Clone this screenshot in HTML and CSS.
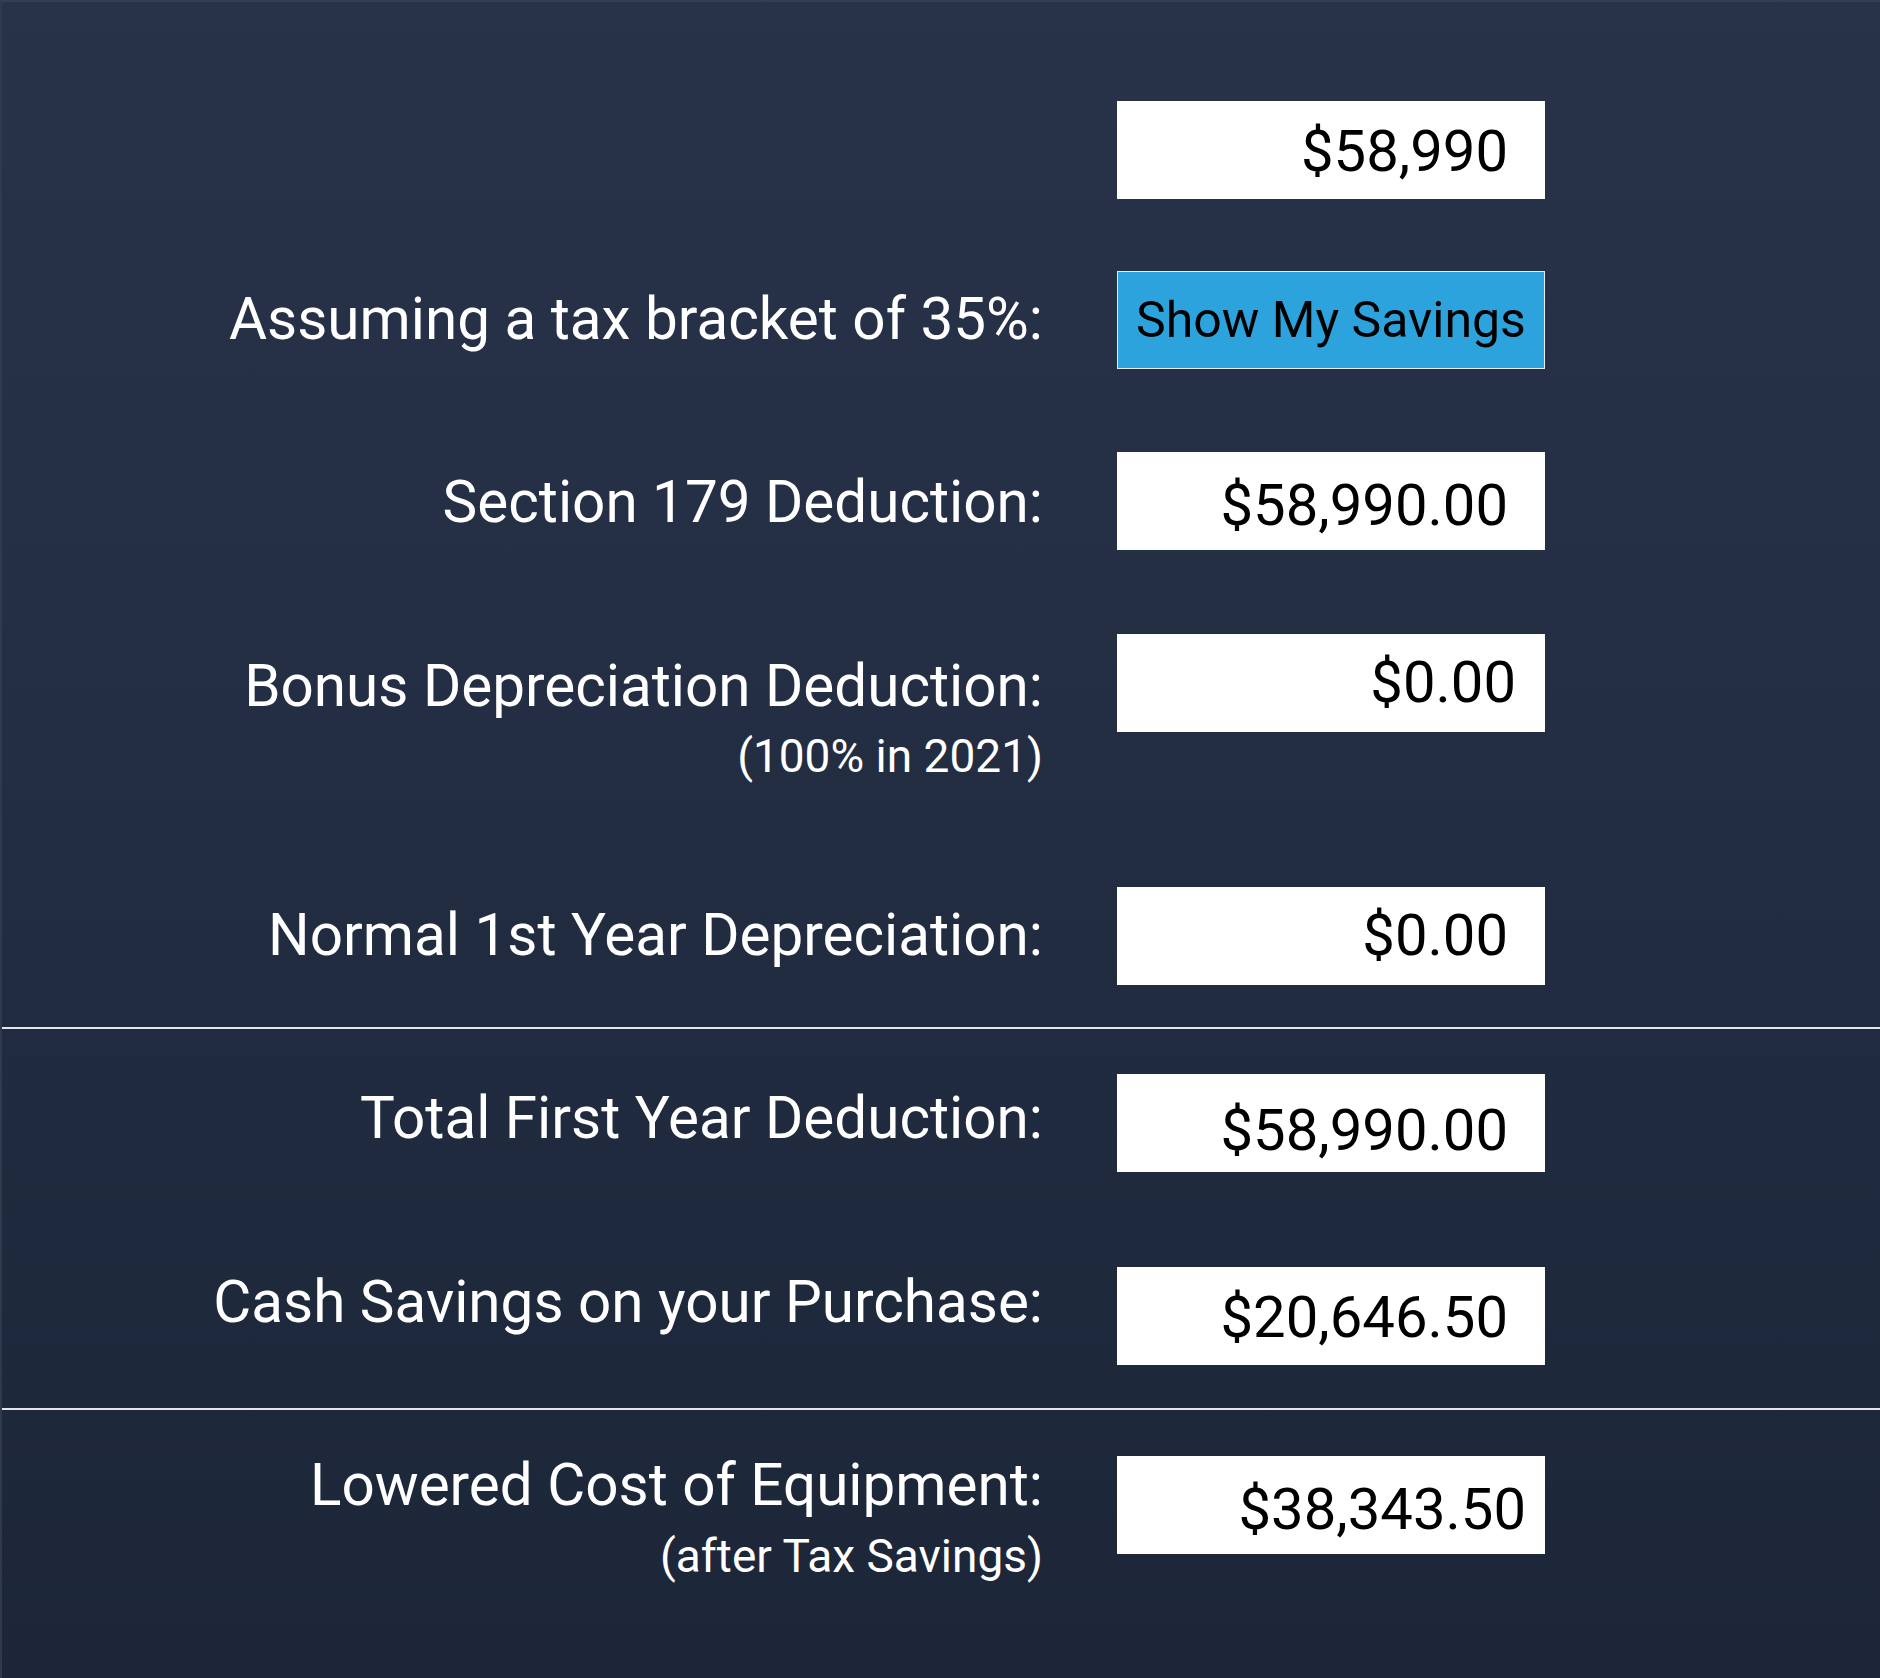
FILE: index.html
```html
<!DOCTYPE html>
<html lang="en">
<head>
<meta charset="utf-8">
<title>Section 179 Savings Calculator</title>
<link rel="stylesheet" href="styles.css">
</head>
<body>
<main class="calc">
  <section class="group group-top">
    <div class="row row-price">
      <div class="label"></div>
      <div class="field field-price">$58,990</div>
    </div>
    <div class="row row-bracket">
      <div class="label label-bracket">Assuming a tax bracket of 35%:</div>
      <button class="btn" type="button">Show My Savings</button>
    </div>
    <div class="row row-s179">
      <div class="label">Section 179 Deduction:</div>
      <div class="field">$58,990.00</div>
    </div>
    <div class="row row-bonus">
      <div class="label label-bonus">Bonus Depreciation Deduction:<span class="sub">(100% in 2021)</span></div>
      <div class="field field-bonus">$0.00</div>
    </div>
    <div class="row row-normal">
      <div class="label label-normal">Normal 1st Year Depreciation:</div>
      <div class="field field-normal">$0.00</div>
    </div>
  </section>
  <hr class="divider divider-1">
  <section class="group group-mid">
    <div class="row row-total">
      <div class="label label-total">Total First Year Deduction:</div>
      <div class="field field-total">$58,990.00</div>
    </div>
    <div class="row row-cash">
      <div class="label label-cash">Cash Savings on your Purchase:</div>
      <div class="field field-cash">$20,646.50</div>
    </div>
  </section>
  <hr class="divider divider-2">
  <section class="group group-bottom">
    <div class="row row-lowered">
      <div class="label label-lowered">Lowered Cost of Equipment:<span class="sub sub-lowered">(after Tax Savings)</span></div>
      <div class="field field-lowered">$38,343.50</div>
    </div>
  </section>
</main>
</body>
</html>
```
FILE: styles.css
```css
* { box-sizing: border-box; }
html, body { margin: 0; padding: 0; }
body {
  width: 1880px;
  min-height: 1678px;
  font-family: Roboto, "Noto Sans", "Liberation Sans", sans-serif;
  background: linear-gradient(180deg, #28334a 0%, #222c41 55%, #1c2638 100%);
  border-top: 2px solid #363f51;
  border-left: 2px solid #2f3a4d;
  color: #fff;
}
.calc {
  display: flex;
  flex-direction: column;
  padding-top: 99px;
  padding-bottom: 96px;
}
.group { display: flex; flex-direction: column; }
.row {
  display: grid;
  grid-template-columns: 1041px 428px;
  column-gap: 74px;
  align-items: start;
}
.label {
  text-align: right;
  font-size: 58.4px;
  line-height: 58px;
  padding-top: 21px;
  color: #fff;
}
.label .sub {
  display: block;
  font-size: 46px;
  line-height: 46px;
  margin-top: 18px;
}
.label .sub-lowered { margin-top: 19px; }
.label-bracket { padding-top: 19px; }
.label-bonus { padding-top: 23px; }
.label-normal { padding-top: 19px; }
.label-total { padding-top: 15px; }
.label-cash { padding-top: 6px; }
.label-lowered { padding-top: 0; }

.field {
  height: 98px;
  background: #fff;
  color: #000;
  font-size: 58px;
  line-height: 68px;
  padding-top: 19px;
  padding-right: 37px;
  text-align: right;
}
.field-price { padding-top: 16px; }
.field-bonus { padding-top: 14px; padding-right: 29px; }
.field-normal { padding-top: 14px; }
.field-total { padding-top: 22px; }
.field-cash { padding-top: 16px; }
.field-lowered { padding-right: 19px; }

.btn {
  height: 98px;
  margin: 0;
  padding: 0;
  border: 1px solid #e6eef4;
  background: #2ca3dd;
  color: #000;
  font-family: inherit;
  font-size: 50px;
  line-height: 58px;
  text-align: center;
  cursor: pointer;
}

.row-bracket { margin-top: 72px; }
.row-s179 { margin-top: 83px; }
.row-bonus { margin-top: 84px; }
.row-normal { margin-top: 108px; }
.row-cash { margin-top: 95px; }

.divider {
  height: 2px;
  margin: 0;
  border: 0;
  background: #e4e6ea;
  width: 1878px;
}
.divider-1 { margin-top: 42px; margin-bottom: 45px; }
.divider-2 { margin-top: 43px; margin-bottom: 46px; }
```
